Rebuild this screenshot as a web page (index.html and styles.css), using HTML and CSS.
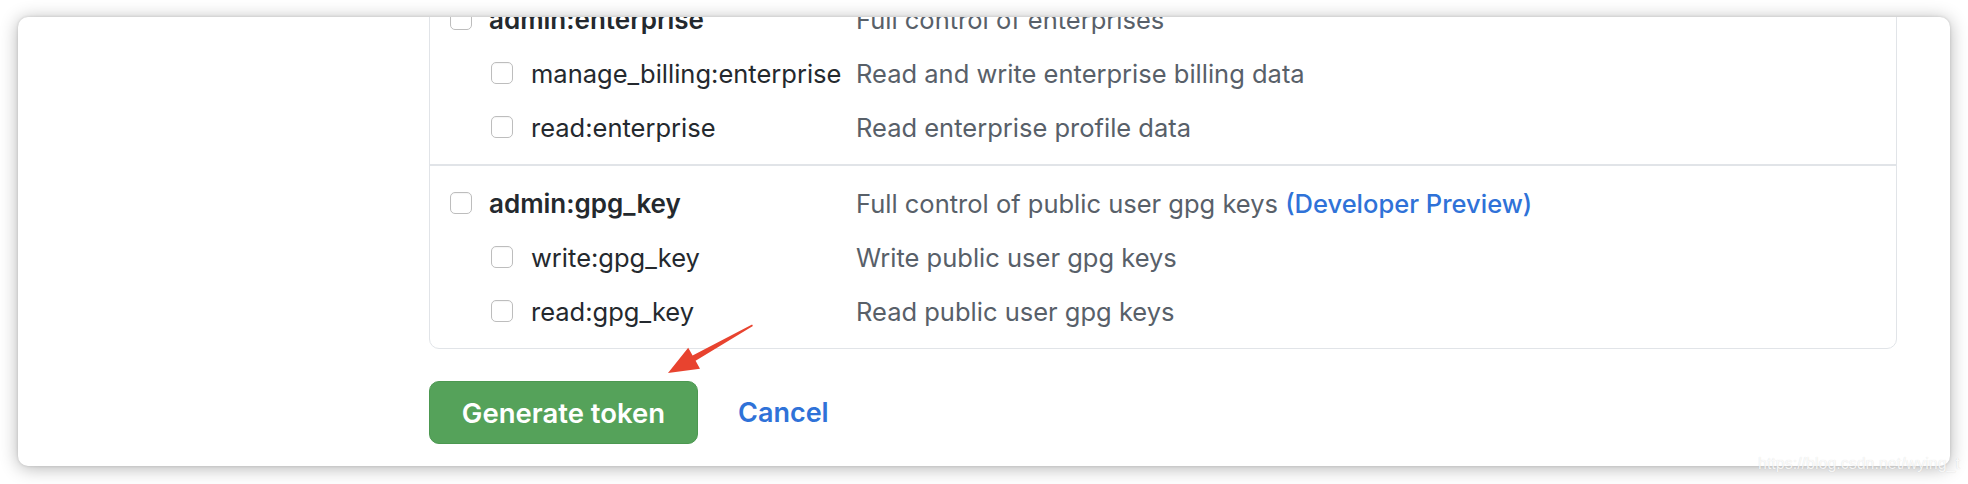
FILE: index.html
```html
<!DOCTYPE html>
<html lang="en">
<head>
<meta charset="utf-8">
<title>Scopes</title>
<link rel="stylesheet" href="styles.css">
</head>
<body>
<div class="window">
  <div class="content">
    <div class="scopes">
      <div class="group">
        <div class="row parent">
          <div class="scope"><span class="cb"></span><span class="name">admin:enterprise</span></div>
          <div class="desc">Full control of enterprises</div>
        </div>
        <div class="row child">
          <div class="scope"><span class="cb"></span><span class="name">manage_billing:enterprise</span></div>
          <div class="desc">Read and write enterprise billing data</div>
        </div>
        <div class="row child">
          <div class="scope"><span class="cb"></span><span class="name">read:enterprise</span></div>
          <div class="desc">Read enterprise profile data</div>
        </div>
      </div>
      <div class="group">
        <div class="row parent">
          <div class="scope"><span class="cb"></span><span class="name">admin:gpg_key</span></div>
          <div class="desc">Full control of public user gpg keys <a class="preview">(Developer Preview)</a></div>
        </div>
        <div class="row child">
          <div class="scope"><span class="cb"></span><span class="name">write:gpg_key</span></div>
          <div class="desc">Write public user gpg keys</div>
        </div>
        <div class="row child">
          <div class="scope"><span class="cb"></span><span class="name">read:gpg_key</span></div>
          <div class="desc">Read public user gpg keys</div>
        </div>
      </div>
    </div>
    <div class="actions">
      <button class="btn-primary" type="button">Generate token</button>
      <a class="cancel">Cancel</a>
    </div>
  </div>
  <svg class="arrow" width="130" height="90" viewBox="0 0 130 90">
    <polygon points="10,56 42,51.7 37.6,43.8 94.9,9 94.1,7.6 34.6,38.6 30.2,30.8" fill="#e8432f"/>
  </svg>
</div>
<div class="watermark">https://blog.csdn.net/wying_t</div>
</body>
</html>
```
FILE: styles.css
```css
html, body {
  margin: 0;
  padding: 0;
  background: #ffffff;
}
body {
  position: relative;
  width: 1968px;
  height: 484px;
  overflow: hidden;
  font-family: Inter, "Liberation Sans", sans-serif;
}
.window {
  position: relative;
  margin: 17px 0 0 18px;
  width: 1932px;
  height: 449px;
  background: #ffffff;
  border-radius: 10px;
  overflow: hidden;
  box-shadow: 0 2px 18px rgba(0, 0, 0, 0.3), 0 0 3px rgba(0, 0, 0, 0.14);
}
.content {
  padding-left: 411px;
}
.scopes {
  width: 1466px;
  margin-top: -36px;
  border: 1px solid #e1e4e8;
  border-radius: 10px;
}
.group {
  padding: 10px 0;
}
.group + .group {
  border-top: 2px solid #e1e4e8;
}
.row {
  display: grid;
  grid-template-columns: 406px 1fr;
  align-items: center;
  height: 54px;
  padding-left: 20px;
  font-size: 25.5px;
}
.scope {
  display: flex;
  align-items: center;
  gap: 17px;
}
.child .scope {
  padding-left: 41px;
  gap: 18px;
}
.cb {
  flex: none;
  box-sizing: border-box;
  width: 22px;
  height: 22px;
  border: 1.5px solid #bdbdbd;
  border-radius: 5px;
  background: #ffffff;
  box-shadow: inset 0 1px 1px rgba(0, 0, 0, 0.04);
}
.name {
  color: #24292e;
}
.parent .name {
  font-weight: 600;
  font-size: 26px;
}
.desc {
  color: #586069;
}
.preview {
  color: #2f72d8;
  font-weight: 500;
}
.actions {
  display: flex;
  align-items: center;
  margin-top: 32px;
}
.btn-primary {
  width: 269px;
  height: 63px;
  border: 1px solid #4c9851;
  border-radius: 10px;
  background: #55a25a;
  color: #ffffff;
  font-family: Inter, "Liberation Sans", sans-serif;
  font-size: 27.5px;
  font-weight: 600;
  padding: 0;
}
.cancel {
  margin-left: 40px;
  color: #2f72d8;
  font-size: 27px;
  font-weight: 600;
}
.arrow {
  position: absolute;
  left: 640px;
  top: 300px;
}
.watermark {
  position: absolute;
  left: 1758px;
  top: 455px;
  font-family: "Liberation Sans", sans-serif;
  font-size: 16px;
  color: rgba(255, 255, 255, 0.85);
  text-shadow: 0 0 1px rgba(0, 0, 0, 0.15);
}
```
